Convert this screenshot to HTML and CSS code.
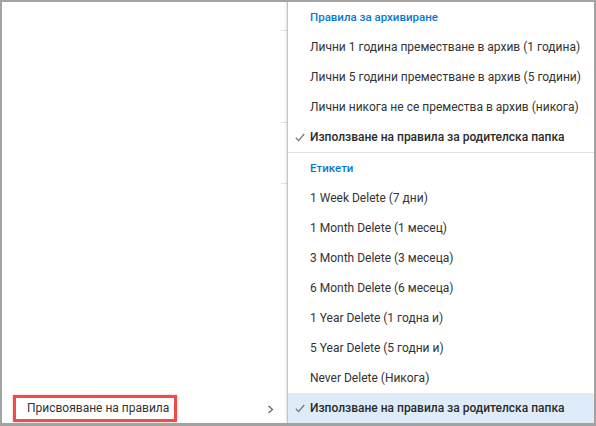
FILE: index.html
```html
<!DOCTYPE html>
<html lang="bg">
<head>
<meta charset="utf-8">
<title>Правила</title>
<link rel="stylesheet" href="styles.css">
</head>
<body>
<div class="frame">
  <div class="left">
    <div class="rows">
      <div class="row r1"><span class="tick"></span></div>
      <div class="row r2"><span class="tick"></span></div>
      <div class="row r3"><span class="tick"></span></div>
    </div>
    <div class="assign">
      <span class="assign-label">Присвояване на правила</span>
      <span class="chev">
        <svg width="7" height="9" viewBox="0 0 7 9"><polyline points="1.5,1 5.5,4.5 1.5,8" fill="none" stroke="#666" stroke-width="1.3"/></svg>
      </span>
    </div>
  </div>
  <div class="menu">
    <div class="item heading"><span class="check"></span><span class="label">Правила за архивиране</span></div>
    <div class="item"><span class="check"></span><span class="label">Лични 1 година преместване в архив (1 година)</span></div>
    <div class="item"><span class="check"></span><span class="label">Лични 5 години преместване в архив (5 години)</span></div>
    <div class="item"><span class="check"></span><span class="label">Лични никога не се премества в архив (никога)</span></div>
    <div class="item strong"><span class="check"><svg width="10" height="9" viewBox="0 0 10 9"><polyline points="0.8,4.8 3.6,7.6 9.2,1" fill="none" stroke="#777" stroke-width="1.3"/></svg></span><span class="label">Използване на правила за родителска папка</span></div>
    <div class="sep"></div>
    <div class="item heading"><span class="check"></span><span class="label">Етикети</span></div>
    <div class="item"><span class="check"></span><span class="label">1 Week Delete (7 дни)</span></div>
    <div class="item"><span class="check"></span><span class="label">1 Month Delete (1 месец)</span></div>
    <div class="item"><span class="check"></span><span class="label">3 Month Delete (3 месеца)</span></div>
    <div class="item"><span class="check"></span><span class="label">6 Month Delete (6 месеца)</span></div>
    <div class="item"><span class="check"></span><span class="label">1 Year Delete (1 годна и)</span></div>
    <div class="item"><span class="check"></span><span class="label">5 Year Delete (5 годни и)</span></div>
    <div class="item"><span class="check"></span><span class="label">Never Delete (Никога)</span></div>
    <div class="item strong selected"><span class="check"><svg width="10" height="9" viewBox="0 0 10 9"><polyline points="0.8,4.8 3.6,7.6 9.2,1" fill="none" stroke="#777" stroke-width="1.3"/></svg></span><span class="label">Използване на правила за родителска папка</span></div>
  </div>
</div>
</body>
</html>
```
FILE: styles.css
```css
html, body {
  margin: 0;
  padding: 0;
  background: #fff;
}
body {
  font-family: Roboto, "Noto Sans", "DejaVu Sans", sans-serif;
  font-size: 12px;
  color: #333;
}
.frame {
  box-sizing: border-box;
  width: 596px;
  height: 426px;
  border-style: solid;
  border-color: #a3a3a3;
  border-width: 2px 2px 3px 2px;
  display: flex;
  background: #fff;
  overflow: hidden;
}
.left {
  flex: 1;
  display: flex;
  flex-direction: column;
  justify-content: space-between;
}
.rows {
  display: flex;
  flex-direction: column;
}
.row {
  display: flex;
  justify-content: flex-end;
  align-items: flex-end;
}
.r1 { height: 29px; }
.r2 { height: 92px; }
.r3 { height: 61px; }
.tick {
  width: 6px;
  height: 1px;
  background: #e3e3e3;
}
.assign {
  height: 30px;
  display: flex;
  align-items: center;
  justify-content: space-between;
  padding: 0 13px 0 11px;
}
.assign-label {
  box-sizing: border-box;
  border: 3px solid #ee4b4b;
  height: 27px;
  line-height: 21px;
  padding: 0 11px 0 11px;
  width: 164px;
  white-space: nowrap;
  box-shadow: 0 0 2px rgba(238, 75, 75, 0.4);
  margin-top: 1px;
}
.chev {
  display: flex;
  align-items: center;
  margin-top: 2px;
}
.menu {
  width: 306px;
  border-left: 1px solid #c4c4c4;
  box-shadow: -1px 0 2px rgba(0, 0, 0, 0.12);
  display: flex;
  flex-direction: column;
  background: #fff;
}
.item {
  height: 30px;
  display: flex;
  align-items: center;
  white-space: nowrap;
}
.check {
  width: 22px;
  flex: none;
  display: flex;
  justify-content: flex-start;
  padding-left: 7px;
  box-sizing: border-box;
}
.heading .label {
  color: #0a78d4;
  font-weight: 500;
  font-size: 11.5px;
}
.strong .label {
  font-weight: 500;
  color: #2b2b2b;
}
.selected {
  background: #deecf9;
}
.sep {
  height: 1px;
  background: #e1e1e1;
}
```
